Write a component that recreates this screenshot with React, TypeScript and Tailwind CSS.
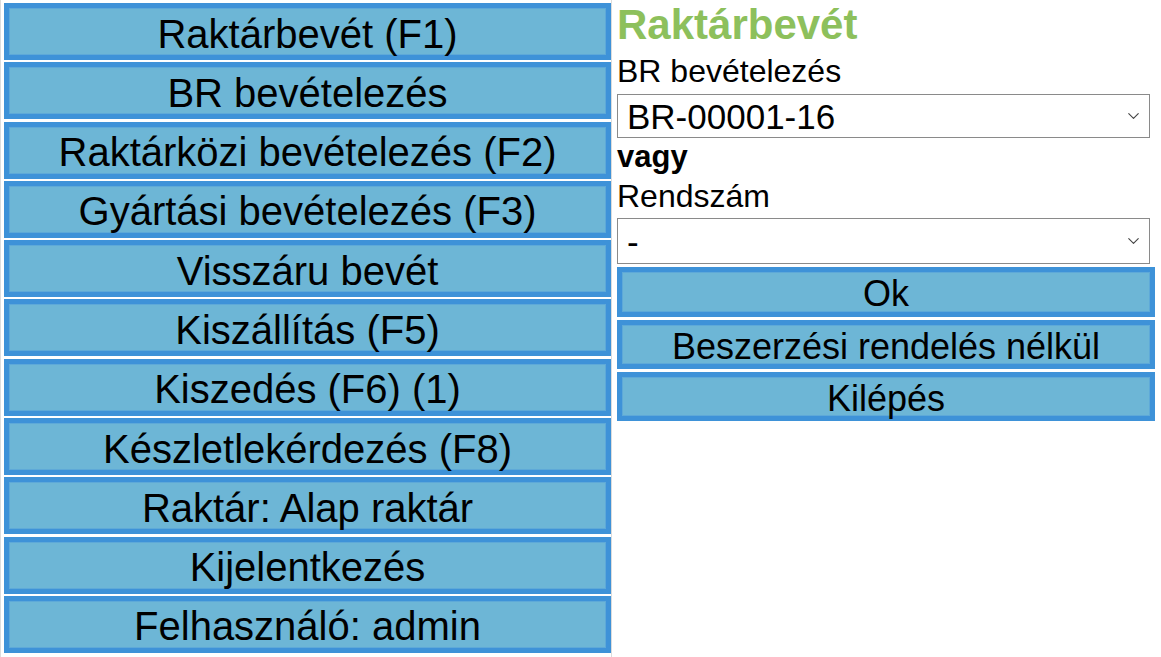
import { ChevronDown } from 'lucide-react';

const menuItems = [
  'Raktárbevét (F1)',
  'BR bevételezés',
  'Raktárközi bevételezés (F2)',
  'Gyártási bevételezés (F3)',
  'Visszáru bevét',
  'Kiszállítás (F5)',
  'Kiszedés (F6) (1)',
  'Készletlekérdezés (F8)',
  'Raktár: Alap raktár',
  'Kijelentkezés',
  'Felhasználó: admin',
];

const btn =
  'w-full flex items-center justify-center pt-[4px] border-[5px] border-[#3e92d8] bg-[#6db6d6] shadow-[inset_0_0_0_1px_#5ea9d8] text-black leading-none';

function Select({ value, options, className }: { value: string; options: string[]; className: string }) {
  return (
    <div className={`relative w-[533px] ${className}`}>
      <select
        defaultValue={value}
        className="w-full h-full appearance-none bg-white border border-[#8a8a8a] pl-[9px] text-[35px] leading-none text-black outline-none"
      >
        {options.map((o) => (
          <option key={o}>{o}</option>
        ))}
      </select>
      <ChevronDown
        className="pointer-events-none absolute right-[7px] top-1/2 -translate-y-1/2 text-[#444]"
        size={19}
        strokeWidth={1.4}
      />
    </div>
  );
}

export default function App() {
  return (
    <div className="w-[1161px] h-[657px] bg-white flex font-['Liberation_Sans',Arial,sans-serif] overflow-hidden">
      <div className="w-[611px] border-l border-[#dcdcdc] pl-[3px] pt-[3px] flex flex-col gap-[2.3px]">
        {menuItems.map((item) => (
          <button key={item} className={`${btn} h-[57px] text-[40px]`}>
            {item}
          </button>
        ))}
      </div>

      <div className="w-[546px] border-l border-[#dcdcdc] pl-[5px] pt-[2px] flex flex-col">
        <h1 className="text-[42px] leading-[46px] font-bold text-[#8dc05c]">Raktárbevét</h1>
        <div className="mt-[6px] text-[32px] leading-[34px] text-black">BR bevételezés</div>
        <Select value="BR-00001-16" options={['BR-00001-16']} className="mt-[6px] h-[44px]" />
        <div className="mt-[2px] text-[31px] leading-[34px] font-bold text-black">vagy</div>
        <div className="mt-[5px] text-[32px] leading-[34px] text-black">Rendszám</div>
        <Select value="-" options={['-']} className="mt-[5px] h-[46px]" />
        <div className="mt-[3px] w-[538px] flex flex-col gap-[3px]">
          <button className={`${btn} h-[50px] text-[36px]`}>Ok</button>
          <button className={`${btn} h-[49px] text-[36px]`}>Beszerzési rendelés nélkül</button>
          <button className={`${btn} h-[49px] text-[36px]`}>Kilépés</button>
        </div>
      </div>
    </div>
  );
}
